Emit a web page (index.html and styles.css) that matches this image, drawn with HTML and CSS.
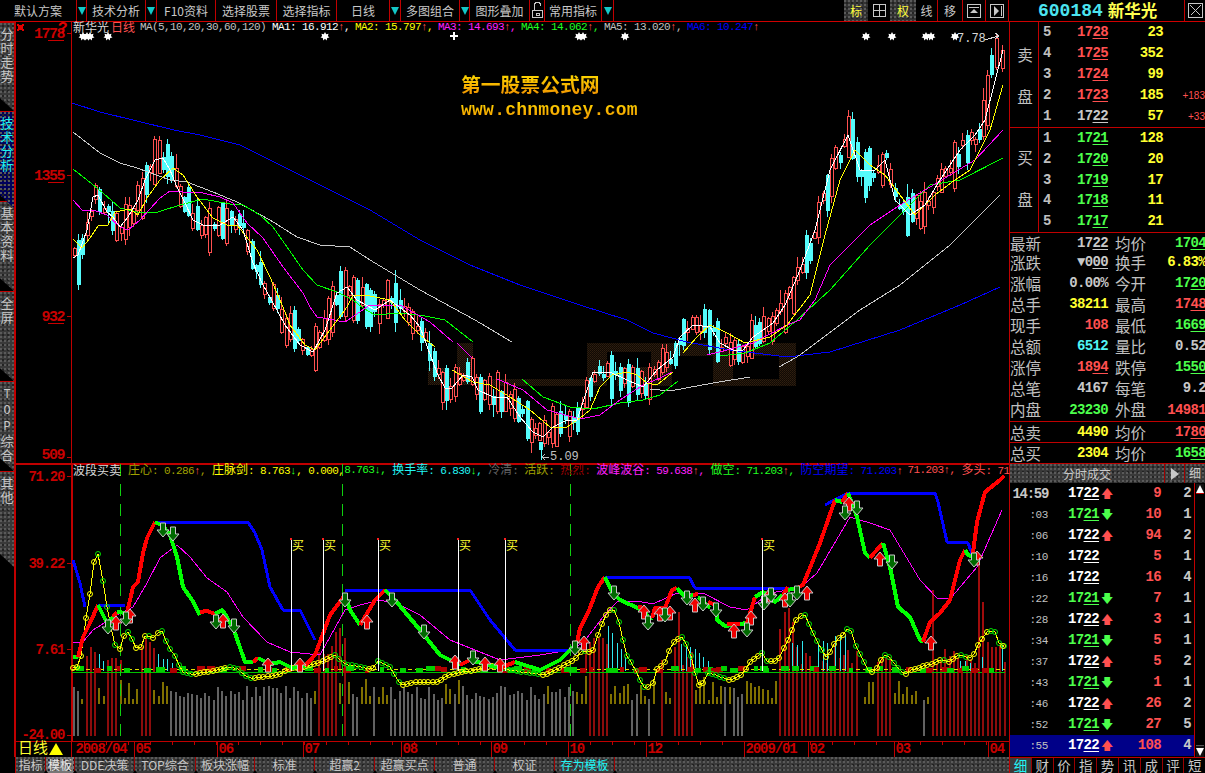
FILE: index.html
```html
<!DOCTYPE html>
<html lang="zh-CN">
<head>
<meta charset="utf-8">
<title>新华光 600184 日线</title>
<link rel="stylesheet" href="styles.css">
</head>
<body>
<div class="app">
  <header class="toolbar">
    <div class="tb w77">默认方案</div><div class="tb drop w10"></div>
    <div class="tb w59">技术分析</div><div class="tb drop w11"></div>
    <div class="tb w59 mono-mix">F10资料</div>
    <div class="tb w61">选择股票</div>
    <div class="tb w60">选择指标</div>
    <div class="tb w53">日线</div><div class="tb drop w11"></div>
    <div class="tb w59">多图组合</div><div class="tb drop w10"></div>
    <div class="tb w60">图形叠加</div>
    <div class="tb w15">
      <svg class="ico" viewBox="0 0 13 17" width="13" height="17"><path class="ln" d="M3 8V4a3.5 3.5 0 0 1 7 0M1.500 8.500h10v7h-10zM5 11.500h3v2H5z"/></svg>
    </div>
    <div class="tb w57">常用指标</div><div class="tb drop w12 end"></div>
    <div class="tb-space"></div>
    <div class="tb w24 on">标</div>
    <div class="tb w22"><svg class="ico" viewBox="0 0 13 13" width="13" height="13"><path class="ln" d="M.5.500h12v12H.5zM6.500.500v12M.5 6.500h12"/></svg></div>
    <div class="tb w26 on">权</div>
    <div class="tb w22 sep">线</div>
    <div class="tb w25">移</div>
    <div class="tb w23"><svg class="ico" viewBox="0 0 14 14" width="14" height="14"><path class="ln" d="M.5.500h13v13H.5zM2 3.500h10"/><path class="fl" d="M7 5l4 4H3z"/></svg></div>
    <div class="tb w23"><svg class="ico" viewBox="0 0 14 14" width="14" height="14"><path class="ln" d="M.5.500h13v13H.5zM11.500 2v10"/><path class="fl" d="M4 2l5 5-5 5z"/></svg></div>
    <div class="tb code"><span class="code-num">600184</span><span class="code-name">新华光</span></div>
    <div class="tb close"><svg class="ico" viewBox="0 0 15 15" width="15" height="15"><path class="ln" d="M.5.500h14v14H.5zM2.500 2.500l10 10M12.500 2.500l-10 10"/></svg></div>
  </header>

  <div class="workspace">
    <div class="left">
      <div class="chart-row">
        <nav class="sidetabs">
          <div class="stab first">分时走势</div>
          <div class="stab active">技术分析</div>
          <div class="stab">基本资料</div>
          <div class="stab">全屏</div>
          <div class="stab"><span class="latin">TOP</span>综合</div>
          <div class="stab last">其他</div>
        </nav>
        <div class="plot">
          <svg id="chart" class="chart" viewBox="16 22 993 735" width="993" height="735" role="img" aria-label="新华光日线图"></svg>

          <div class="legend legend-top">
            <span class="cn cwhite">新华光</span><span class="cn cred gap2">日线</span><span class="cgrey gap5">MA(5,10,20,30,60,120)</span>
            <span class="ma first-ma cbright">MA1: 16.912<i class="cred">↑</i>,</span><span class="ma cyellow">MA2: 15.797<i class="cred">↑</i>,</span><span class="ma cmag">MA3: 14.693<i class="cred">↑</i>,</span><span class="ma cgreen">MA4: 14.062<i class="cred">↑</i>,</span><span class="ma cgrey">MA5: 13.020<i class="cred">↑</i>,</span><span class="ma cblue">MA6: 10.247<i class="cred">↑</i></span>
          </div>

          <div class="watermark">
            <div class="wm-cn">第一股票公式网</div>
            <div class="wm-url">www.chnmoney.com</div>
          </div>

          <div class="legend legend-low">
            <span class="cn cwhite">波段买卖</span><span class="colive gap7"><span class="cn">庄心</span>: 0.286<i class="cred">↑</i>, </span><span class="cyellow"><span class="cn">庄脉剑</span>: 8.763<i class="cgreen">↓</i>, 0.000,</span><span class="cgreen">8.763<i>↓</i>, </span><span class="ccyan"><span class="cn">换手率</span>: 6.830<i class="cgreen">↓</i>, </span><span class="cdim"><span class="cn">冷清</span>: </span><span class="colive"><span class="cn">活跃</span>: </span><span class="cdarkred"><span class="cn">热烈</span>: </span><span class="cmag"><span class="cn">波峰波谷</span>: 59.638<i class="cred">↑</i>, </span><span class="cgreen"><span class="cn">做空</span>: 71.203<i class="cred">↑</i>, </span><span class="cblue"><span class="cn">防空期望</span>: 71.203<i class="cred">↑</i></span><span class="cred gap5">71.203<i>↑</i>, </span><span class="cred"><span class="cn">多头</span>: 71</span>
          </div>
        </div>
      </div>
      <nav class="bottomtabs">
        <div class="btab b30">指标</div>
        <div class="btab b29 sel">模板</div>
        <div class="btab b60">DDE决策</div>
        <div class="btab b61">TOP综合</div>
        <div class="btab b59">板块涨幅</div>
        <div class="btab b60">标准</div>
        <div class="btab b60">超赢2</div>
        <div class="btab b60">超赢买点</div>
        <div class="btab b60">普通</div>
        <div class="btab b60">权证</div>
        <div class="btab b60 ccyan">存为模板</div>
        <div class="btab-rest"></div>
      </nav>
    </div>

    <aside class="panel">
      <section class="book">
        <div class="book-side"><span>卖</span><span>盘</span></div>
        <div class="book-rows">
          <div class="book-row"><b class="idx">5</b><b class="px cup">17<u>28</u></b><b class="vol">23</b><span class="delta"></span></div>
          <div class="book-row"><b class="idx">4</b><b class="px cup">17<u>25</u></b><b class="vol">352</b><span class="delta"></span></div>
          <div class="book-row"><b class="idx">3</b><b class="px cup">17<u>24</u></b><b class="vol">99</b><span class="delta"></span></div>
          <div class="book-row"><b class="idx">2</b><b class="px cup">17<u>23</u></b><b class="vol">185</b><span class="delta">+183</span></div>
          <div class="book-row"><b class="idx">1</b><b class="px cflat">17<u>22</u></b><b class="vol">57</b><span class="delta">+33</span></div>
        </div>
      </section>
      <section class="book">
        <div class="book-side"><span>买</span><span>盘</span></div>
        <div class="book-rows">
          <div class="book-row"><b class="idx">1</b><b class="px cdown">17<u>21</u></b><b class="vol">128</b><span class="delta"></span></div>
          <div class="book-row"><b class="idx">2</b><b class="px cdown">17<u>20</u></b><b class="vol">20</b><span class="delta"></span></div>
          <div class="book-row"><b class="idx">3</b><b class="px cdown">17<u>19</u></b><b class="vol">17</b><span class="delta"></span></div>
          <div class="book-row"><b class="idx">4</b><b class="px cdown">17<u>18</u></b><b class="vol">11</b><span class="delta"></span></div>
          <div class="book-row"><b class="idx">5</b><b class="px cdown">17<u>17</u></b><b class="vol">21</b><span class="delta"></span></div>
        </div>
      </section>
      <section class="stats">
        <div class="s-row"><span>最新</span><b class="cflat">17<u>22</u></b><span class="l2">均价</span><b class="cdown">17<u>04</u></b></div>
        <div class="s-row"><span>涨跌</span><b class="cflat">▼0<u>00</u></b><span class="l2">换手</span><b class="cyel">6.83%</b></div>
        <div class="s-row"><span>涨幅</span><b class="cflat">0.00%</b><span class="l2">今开</span><b class="cdown">17<u>20</u></b></div>
        <div class="s-row"><span>总手</span><b class="cyel">38211</b><span class="l2">最高</span><b class="cup">17<u>48</u></b></div>
        <div class="s-row"><span>现手</span><b class="cup">108</b><span class="l2">最低</span><b class="cdown">16<u>69</u></b></div>
        <div class="s-row"><span>总额</span><b class="ccy">6512</b><span class="l2">量比</span><b class="cflat">0.52</b></div>
        <div class="s-row"><span>涨停</span><b class="cup">18<u>94</u></b><span class="l2">跌停</span><b class="cdown">15<u>50</u></b></div>
        <div class="s-row"><span>总笔</span><b class="cflat">4167</b><span class="l2">每笔</span><b class="cflat">9.2</b></div>
        <div class="s-row"><span>内盘</span><b class="cdown">23230</b><span class="l2">外盘</span><b class="cup">14981</b></div>
      </section>
      <section class="stats single">
        <div class="s-row"><span>总卖</span><b class="cyel">4490</b><span class="l2">均价</span><b class="cup">17<u>80</u></b></div>
      </section>
      <section class="stats single">
        <div class="s-row"><span>总买</span><b class="cyel">2304</b><span class="l2">均价</span><b class="cdown">16<u>58</u></b></div>
      </section>
      <div class="tick-head tex">
        <div class="th-title">分时成交</div>
        <div class="th-play"><svg viewBox="0 0 8 12" width="8" height="12"><path class="fl" d="M0 0l8 6-8 6z"/></svg></div>
        <div class="th-fine">细</div>
      </div>
      <div class="tick-body">
        <div class="ticks">
          <div class="tick"><b class="t big">14:59</b><b class="p cw">17<u>22</u></b><i class="dir cup">🡅</i><b class="v">9</b><b class="n">2</b></div>
          <div class="tick"><span class="t">:03</span><b class="p cdown">17<u>21</u></b><i class="dir cdown">🡇</i><b class="v">10</b><b class="n">1</b></div>
          <div class="tick"><span class="t">:06</span><b class="p cw">17<u>22</u></b><i class="dir cup">🡅</i><b class="v">94</b><b class="n">2</b></div>
          <div class="tick"><span class="t">:10</span><b class="p cw">17<u>22</u></b><i class="dir"></i><b class="v">5</b><b class="n">1</b></div>
          <div class="tick"><span class="t">:16</span><b class="p cw">17<u>22</u></b><i class="dir"></i><b class="v">16</b><b class="n">4</b></div>
          <div class="tick"><span class="t">:22</span><b class="p cdown">17<u>21</u></b><i class="dir cdown">🡇</i><b class="v">7</b><b class="n">1</b></div>
          <div class="tick"><span class="t">:28</span><b class="p cw">17<u>22</u></b><i class="dir cup">🡅</i><b class="v">3</b><b class="n">1</b></div>
          <div class="tick"><span class="t">:34</span><b class="p cdown">17<u>21</u></b><i class="dir cdown">🡇</i><b class="v">5</b><b class="n">1</b></div>
          <div class="tick"><span class="t">:37</span><b class="p cw">17<u>22</u></b><i class="dir cup">🡅</i><b class="v">5</b><b class="n">2</b></div>
          <div class="tick"><span class="t">:43</span><b class="p cdown">17<u>21</u></b><i class="dir cdown">🡇</i><b class="v">1</b><b class="n">1</b></div>
          <div class="tick"><span class="t">:46</span><b class="p cw">17<u>22</u></b><i class="dir cup">🡅</i><b class="v">26</b><b class="n">2</b></div>
          <div class="tick"><span class="t">:52</span><b class="p cdown">17<u>21</u></b><i class="dir cdown">🡇</i><b class="v">27</b><b class="n">5</b></div>
          <div class="tick now"><span class="t">:55</span><b class="p cw">17<u>22</u></b><i class="dir cup">🡅</i><b class="v">108</b><b class="n">4</b></div>
        </div>
        <div class="scroll">
          <div class="sbtn"><svg viewBox="0 0 8 8" width="8" height="8"><path class="fw" d="M4 0l4 8H0z"/></svg></div>
          <div class="sbtn"><svg viewBox="0 0 8 8" width="8" height="8"><path class="fw" d="M4 8L0 0h8z"/></svg></div>
        </div>
      </div>
      <nav class="ptabs">
        <div class="ptab on">细</div><div class="ptab">财</div><div class="ptab">价</div><div class="ptab">指</div><div class="ptab">势</div><div class="ptab">讯</div><div class="ptab">成</div><div class="ptab">评</div><div class="ptab">短</div>
      </nav>
    </aside>
  </div>
</div>
<script src="chart.js"></script>
</body>
</html>
```
FILE: styles.css
```css
* { box-sizing: border-box; }
html, body { margin: 0; padding: 0; background: #000; }
body { width: 1205px; height: 773px; overflow: hidden; color: #c0c0c0;
  font-family: "Noto Sans CJK SC", "Liberation Sans", sans-serif; font-size: 12px; }
i { font-style: normal; }
u { text-decoration: underline; text-decoration-thickness: 1px; text-underline-offset: 2px; text-decoration-skip-ink: none; }
.app { width: 1205px; height: 773px; display: flex; flex-direction: column; }

.tex, .tb.on, .stab, .btab, .btab-rest { background-color: #393939;
  background-image: radial-gradient(circle at 1px 1px, #5c5c5c .7px, transparent .9px), radial-gradient(circle at 3px 3px, #222 .7px, transparent .9px);
  background-size: 4px 4px, 5px 5px; }

/* toolbar */
.toolbar { flex: 0 0 22px; display: flex; border-bottom: 1px solid #d00000; }
.tb { display: flex; align-items: center; justify-content: center; border-right: 1px solid #c00000;
  color: #c8c8c8; font-size: 12px; line-height: 1; height: 21px; white-space: nowrap; }
.w77 { width: 77px; } .w59 { width: 59px; } .w61 { width: 61px; } .w60 { width: 60px; } .w53 { width: 53px; }
.w57 { width: 57px; } .w10 { width: 10px; } .w11 { width: 11px; } .w12 { width: 12px; } .w15 { width: 15px; }
.w24 { width: 24px; } .w22 { width: 22px; } .w26 { width: 26px; } .w25 { width: 25px; } .w23 { width: 23px; }
.drop::before { content: ""; border-left: 4px solid transparent; border-right: 4px solid transparent; border-top: 8px solid #12c8c8; }
.tb-space { width: 230px; }
.tb.on { color: #ffff3c; background-color: #333; border-right: 0; }
.toolbar .w22, .toolbar .w26, .w24 { border-right: 0; }
.toolbar .sep { border-right: 1px solid #c00000; }
.ico { display: block; }
.ln { fill: none; stroke: #c8c8c8; stroke-width: 1; shape-rendering: crispEdges; }
.fl { fill: #c8c8c8; }
.fw { fill: #fff; }
.code { width: 176px; justify-content: flex-start; padding-left: 29px; gap: 5px; }
.code-num { font: bold 18px "Liberation Mono", monospace; color: #4ce4f0; }
.code-name { font-size: 16.500px; font-weight: 700; color: #ffff50; }
.close { width: 20px; border-right: 0; }

/* layout */
.workspace { flex: 1; display: flex; min-height: 0; }
.left { width: 1009px; display: flex; flex-direction: column; }
.chart-row { flex: 0 0 735px; display: flex; }
.sidetabs { width: 16px; border-right: 2px solid #c00000; display: flex; flex-direction: column; overflow: hidden; }
.stab { width: 14px; height: 90px; flex: 0 0 auto; padding: 4px 0 0 0; text-align: center; word-break: break-all;
  font-size: 13px; line-height: 14px; color: #c8c8c8;
  clip-path: polygon(0 0, 100% 0, 100% 100%, 0 calc(100% - 13px)); border-top: 1px solid #c00000; }
.stab.first { height: 89px; }
.stab.active { height: 97px; margin-bottom: -7px; background-color: #00005c; color: #1cf0f0; position: relative; z-index: 1; }
.stab.last { height: 96px; }
.latin { font-family: "Liberation Mono", monospace; font-size: 12px; }
.plot { position: relative; width: 993px; height: 735px; }
.chart { display: block; background: #000; }
.chart text { font-family: "Liberation Mono", monospace; }

/* legends over the chart */
.legend { position: absolute; left: 57px; height: 14px; display: flex; white-space: pre; align-items: center;
  font: 11px/14px "Liberation Mono", "Noto Sans CJK SC", monospace; letter-spacing: -.6px; }
.legend .cn { font-family: "Noto Sans CJK SC", sans-serif; font-size: 12px; letter-spacing: 0; }
.legend-top { top: -2px; width: 930px; }
.legend-low { top: 441px; width: 936px; }
.gap2 { margin-left: 2px; } .gap5 { margin-left: 5px; } .gap7 { margin-left: 7px; }
.ma { width: 83px; flex: 0 0 83px; }
.first-ma { margin-left: 6px; }
.cwhite { color: #d8d8d8; } .cbright { color: #fff; } .cred { color: #ff5050; } .cgrey { color: #c0c0c0; }
.cyellow { color: #ffff00; } .cmag { color: #ff20ff; } .cgreen { color: #20ff20; } .cblue { color: #0000ff; }
.colive { color: #a0a000; } .ccyan { color: #22f4f4; } .cdim { color: #666; } .cdarkred { color: #a00000; }

.watermark { position: absolute; left: 445px; top: 50px; font-weight: 700; }
.wm-cn, .wm-url { background: linear-gradient(#ffe000, #f09000); -webkit-background-clip: text; background-clip: text; color: transparent; }
.wm-cn { font-size: 19.800px; line-height: 24px; }
.wm-url { font: bold 18px/22px "Liberation Mono", monospace; letter-spacing: .25px; margin-top: 3px; }

/* bottom strip */
.bottomtabs { flex: 1; display: flex; margin-left: 15px; border-left: 1px solid #c00000; }
.btab { flex: 0 0 auto; display: flex; align-items: center; justify-content: center; position: relative; height: 16px;
  border-right: 1px solid #a00000; color: #c8c8c8; font-size: 12px; line-height: 1; white-space: nowrap; font-family: "Noto Sans CJK SC", sans-serif; }
.btab::after { content: ""; position: absolute; right: -3px; bottom: 0; border-left: 2.500px solid transparent; border-right: 2.500px solid transparent; border-bottom: 3px solid #000; z-index: 1; }
.btab.ccyan { color: #22f4f4; }
.btab.sel { background-color: #777; color: #e8e8e8; }
.b30 { width: 30px; } .b29 { width: 29px; } .b60 { width: 60px; } .b61 { width: 61px; } .b59 { width: 59px; }
.btab-rest { flex: 1; height: 16px; }

/* right panel */
.panel { width: 196px; display: flex; flex-direction: column; border-left: 1px solid #c00000; }
.panel b { font-family: "Liberation Mono", monospace; font-size: 14px; letter-spacing: -.65px; font-weight: 700; }
.book { display: flex; height: 105px; flex: 0 0 105px; }
.book + .book { border-top: 1px solid #c00000; }
.book-side { width: 29px; border-right: 1px solid #c00000; display: flex; flex-direction: column; justify-content: center; gap: 26px; align-items: center;
  font-size: 15.500px; line-height: 1; color: #c0c0c0; padding: 2px 0 0 2px; }
.book + .book .book-side { padding: 0 0 3px 2px; }
.book-rows { flex: 1; display: flex; flex-direction: column; }
.book-row { height: 21px; flex: 0 0 21px; display: flex; align-items: center; line-height: 21px; }
.book + .book .book-row { height: 20.800px; flex-basis: 20.800px; }
.idx { width: 38px; padding-left: 4px; color: #c0c0c0; }
.px { width: 31px; }
.vol { width: 55px; text-align: right; color: #ffff30; }
.delta { flex: 1; text-align: right; color: #ff5050; font-size: 10px; font-family: "Liberation Sans", sans-serif; }
.cup { color: #ff5050; } .cdown { color: #4cff4c; } .cflat { color: #c8c8c8; } .cyel { color: #ffff30; } .ccy { color: #50f4f4; } .cw { color: #fff; }

.stats { border-top: 1px solid #c00000; }
.stats.single { height: 21px; }
.s-row { height: 21px; display: grid; grid-template-columns: 31px 67px 38px 1fr; align-items: center; line-height: 21px; white-space: nowrap; overflow: hidden; }
.stats:not(.single) .s-row:first-child { height: 19px; }
.stats:not(.single) .s-row:last-child { height: 22px; }
.stats.single .s-row { height: 19px; }
.s-row span { font-size: 15.500px; line-height: 1; color: #c0c0c0; }
.s-row .l2 { padding-left: 7px; }
.s-row b { text-align: right; }
.s-row b:last-child { margin-right: -1px; }

.tick-head { flex: 0 0 20px; display: flex; align-items: center; border-top: 1px solid #c00000; color: #c8c8c8; }
.th-title { width: 154px; text-align: center; font-size: 12px; line-height: 1; }
.th-play { width: 20px; height: 19px; border-left: 1px solid #a00000; display: flex; align-items: center; justify-content: center; }
.th-fine { flex: 1; height: 19px; border-left: 1px solid #a00000; text-align: center; line-height: 18px; font-size: 12px; }

.tick-body { flex: 0 0 274px; display: flex; }
.ticks { width: 185px; }
.tick { height: 21px; display: flex; align-items: center; line-height: 21px; white-space: nowrap; }
.t { width: 38px; text-align: right; color: #c0c0c0; font: 11px "Liberation Mono", monospace; letter-spacing: -.4px; }
.panel .t.big { font-size: 14px; letter-spacing: -1.300px; color: #c8c8c8; }
.p { width: 31px; margin-left: 20px; }
.dir { width: 15px; font-family: "DejaVu Sans", sans-serif; font-size: 12px; text-align: center; line-height: 1; }
.panel .v { width: 47px; text-align: right; color: #ff5050; }
.panel .n { width: 30px; text-align: right; color: #c8c8c8; }
.tick.now { background: #000088; }
.scroll { flex: 1; border-left: 1px solid #c00000; display: flex; flex-direction: column; justify-content: space-between; padding: 1px 1px 0 1px; }
.sbtn { height: 10px; display: flex; align-items: center; justify-content: center; background: #111; border-bottom: 1px solid #c00000; }
.sbtn:last-child { border-bottom: 0; border-top: 1px solid #555; height: 12px; }

.ptabs { flex: 1; display: flex; border-top: 1px solid #c00000; }
.ptab { flex: 0 0 21.800px; font-size: 13.500px; line-height: 15px; text-align: center; color: #c8c8c8; border-right: 1px solid #900; }
.ptab.on { color: #22f4f4; background: #3a3a3a; }
```
FILE: chart.js
```js
(function () {
  var NS = 'http://www.w3.org/2000/svg';
  var svg = document.getElementById('chart');
  var seed = 184;
  function rnd() { seed = (seed * 16807) % 2147483647; return seed / 2147483647; }
  function el(tag, attrs, text, parent) {
    var n = document.createElementNS(NS, tag);
    for (var k in attrs) n.setAttribute(k, attrs[k]);
    if (text !== undefined && text !== null) n.textContent = text;
    (parent || svg).appendChild(n);
    return n;
  }
  function poly(points, color, width, extra) {
    var a = { points: points.map(function (p) { return p[0] + ',' + p[1]; }).join(' '), fill: 'none', stroke: color, 'stroke-width': width, 'shape-rendering': 'crispEdges', 'stroke-linejoin': 'round' };
    for (var k in extra || {}) a[k] = extra[k];
    el('polyline', a);
  }
  function line(x1, y1, x2, y2, color, w, dash) {
    var a = { x1: x1, y1: y1, x2: x2, y2: y2, stroke: color, 'stroke-width': w || 1, 'shape-rendering': 'crispEdges' };
    if (dash) a['stroke-dasharray'] = dash;
    el('line', a);
  }
  function rect(x, y, w, h, fill, stroke) {
    var a = { x: x, y: y, width: w, height: h, fill: fill, 'shape-rendering': 'crispEdges' };
    if (stroke) a.stroke = stroke;
    el('rect', a);
  }
  function interp(path, x) {
    if (x <= path[0][0]) return path[0][1];
    for (var i = 1; i < path.length; i++) {
      if (x <= path[i][0]) {
        var a = path[i - 1], b = path[i];
        return a[1] + (b[1] - a[1]) * (x - a[0]) / (b[0] - a[0]);
      }
    }
    return path[path.length - 1][1];
  }

  /* ---------- background ghost blocks ---------- */
  var RED = '#c00000';
  var ghost = [[428,368,22,17],[457,343,16,42],[473,379,114,7],[587,343,20,43],[587,343,85,9],[651,343,21,43],[617,367,55,19],[672,343,41,13],[713,343,83,13],[713,356,20,30],[733,379,63,7],[779,343,17,43]];
  var defs = el('defs', {});
  var pat = el('pattern', { id: 'ghostp', width: 2, height: 2, patternUnits: 'userSpaceOnUse' }, null, defs);
  el('rect', { width: 2, height: 2, fill: '#100a04' }, null, pat);
  el('rect', { width: 1, height: 1, fill: '#301f10' }, null, pat);
  el('rect', { x: 1, y: 1, width: 1, height: 1, fill: '#28190c' }, null, pat);
  ghost.forEach(function (g) { rect(g[0], g[1], g[2], g[3], 'url(#ghostp)'); });

  /* ---------- moving average lines of the price chart ---------- */
  var white = [[73,258],[78,255],[87,230],[93,197],[98,195],[107,212],[113,217],[120,227],[128,217],[138,200],[145,180],[155,160],[163,158],[170,170],[177,187],[185,203],[193,220],[203,225],[220,225],[233,217],[243,230],[253,263],[263,285],[277,310],[285,325],[300,345],[313,352],[325,330],[337,293],[347,287],[357,300],[375,310],[390,300],[410,315],[420,327],[437,373],[445,388],[452,388],[463,375],[472,377],[478,390],[493,397],[507,397],[520,417],[533,432],[543,437],[553,427],[567,420],[577,420],[587,390],[593,372],[610,372],[627,380],[643,387],[657,370],[673,357],[680,337],[693,325],[710,327],[720,343],[733,350],[743,350],[753,337],[773,323],[785,305],[800,270],[815,230],[830,170],[848,135],[860,170],[875,170],[885,160],[895,200],[910,215],[925,205],[940,180],[960,150],[975,135],[985,120],[1003,50]];
  var yellow = [[[73,239],[82,248],[90,238],[98,226],[108,225],[115,212],[130,209],[138,215],[147,198],[160,180],[173,168],[183,175],[197,197],[213,218],[227,225],[237,225],[257,250],[270,277],[283,307],[290,325],[305,345],[315,350],[330,330],[347,307],[353,295],[370,296],[390,300],[405,320],[420,335],[435,347]],
    [[452,370],[473,382],[490,385],[510,397],[530,410],[550,427],[567,427],[580,418],[590,410],[600,387],[612,375],[627,372],[637,375],[647,383],[657,385],[673,372]],
    [[683,353],[697,337],[710,325],[727,333],[745,343],[770,337],[787,325],[810,295],[825,235],[840,180],[855,150],[870,165],[885,175],[900,195],[915,215],[935,195],[955,180],[970,170],[990,130],[1003,85]]];
  var magenta = [[[73,200],[82,210],[93,210],[107,215],[120,227],[128,230],[140,220],[160,198],[170,191],[183,192],[203,193],[220,197],[233,203],[247,223],[263,238],[283,267],[303,293],[310,307],[317,317],[345,322],[370,305],[400,305],[430,322],[453,342]],
    [[457,343],[472,358]],
    [[497,379],[523,390],[547,410],[580,419],[600,415],[620,400],[643,385],[660,378],[672,372]],
    [[707,355],[727,350],[753,343],[787,325],[800,320],[815,300],[830,265],[855,240],[870,225],[900,205],[925,190],[950,175],[975,160],[1003,130]]];
  var green = [[[73,169],[87,180],[103,193],[120,208],[137,212],[158,212],[180,205],[203,199],[230,204],[243,205],[260,215],[273,227],[287,247],[303,270],[317,285],[337,292],[353,300],[363,308],[375,315],[400,313],[425,316],[445,320],[473,342]],
    [[522,379],[543,397],[570,407],[593,409],[620,403],[643,400],[660,395],[678,381]],
    [[720,356],[745,353],[770,343],[797,320],[830,290],[870,245],[900,215],[930,185],[960,180],[1003,158]]];
  var gray = [[[73,132],[100,153],[120,163],[137,168],[170,180],[187,182],[213,192],[237,202],[270,220],[297,237],[320,245],[350,247],[370,260],[400,278],[420,290],[475,320],[512,342]],
    [[650,389],[670,391],[713,383],[750,377]],
    [[779,367],[797,357],[820,340],[860,310],[900,285],[950,245],[1000,195]]];
  var blue = [[[72,103],[100,112],[174,130],[200,135],[240,145],[280,165],[330,190],[370,210],[420,240],[470,265],[520,285],[580,305],[627,320],[653,333],[687,342],[730,350],[787,357],[830,352],[900,330],[960,305],[1000,287]]];

  /* ---------- candles ---------- */
  var STEP = 4.23;
  for (var i = 0; i < 218; i++) {
    var x = Math.round(73 + i * STEP);
    if (x > 982) break;
    var c = interp(white, x);
    var slope = interp(white, x + 4) - interp(white, x - 4);
    var up = rnd() < (slope < 0 ? 0.78 : 0.38);
    var h = 4 + Math.pow(rnd(), 1.6) * 42;
    var mid = c + (rnd() - .5) * 14;
    var top = Math.round(mid - h / 2), bot = Math.round(mid + h / 2);
    var wt = Math.round(top - rnd() * rnd() * 14 - 1), wb = Math.round(bot + rnd() * rnd() * 12 + 1);
    var col = up ? '#ff5050' : '#54fcfc';
    line(x + 1.5, wt, x + 1.5, wb, col, 1);
    if (up) rect(x + .5, top + .5, 3, Math.max(bot - top, 1), '#000', col);
    else rect(x, top, 4, Math.max(bot - top, 1), col);
  }
  [[986,70,130,75,125,1],[990,48,78,55,75,0],[995,35,70,38,67,1],[1001,45,72,50,68,1]].forEach(function (k) {
    var col = k[5] ? '#ff5050' : '#54fcfc';
    line(k[0] + 1.5, k[1], k[0] + 1.5, k[2], col, 1);
    if (k[5]) rect(k[0] + .5, k[3] + .5, 3, k[4] - k[3], '#000', col); else rect(k[0], k[3], 4, k[4] - k[3], col);
  });
  line(541, 442, 541, 460, '#54fcfc', 1);
  rect(539, 442, 4, 8, '#54fcfc');

  blue.forEach(function (p) { poly(p, '#0000ff', 1); });
  gray.forEach(function (p) { poly(p, '#c8c8c8', 1); });
  green.forEach(function (p) { poly(p, '#00ff00', 1); });
  magenta.forEach(function (p) { poly(p, '#ff00ff', 1); });
  yellow.forEach(function (p) { poly(p, '#ffff00', 1); });
  poly(white, '#ffffff', 1);

  /* extreme notes */
  el('text', { x: 550, y: 460, fill: '#c0c0c0', 'font-size': 12 }, '5.09');
  poly([[549, 457], [542, 457]], '#c0c0c0', 1);
  poly([[545, 454], [542, 457], [545, 460]], '#c0c0c0', 1);
  el('text', { x: 957, y: 42, fill: '#d8d8d8', 'font-size': 12 }, '7.78');
  poly([[985, 40], [998, 36]], '#d8d8d8', 1);
  poly([[995, 33], [999, 36], [995, 39]], '#d8d8d8', 1);

  /* note markers */
  [83, 87, 90, 108, 325, 454, 579, 583, 625, 866, 892, 926, 931, 955].forEach(function (mx) {
    var cross = mx === 454;
    el('path', { d: cross ? 'M' + (mx - 1) + ' 32h2v3h3v2h-3v3h-2v-3h-3v-2h3z' : 'M' + mx + ' 32l1.200 2.300 2.300-.6-.6 2.300 1.600 1.500-2.300.5-.5 2.500-1.700-1.700-1.700 1.700-.5-2.500-2.300-.5 1.600-1.500-.6-2.300 2.300.6z', fill: '#fff' });
  });

  /* ---------- price axis ---------- */
  line(71.500, 22, 71.500, 463, RED, 1);
  [[1778, 40, '78'], [1355, 182, '55'], [932, 323, '32'], [509, 461, '']].forEach(function (t) {
    el('text', { x: 64, y: t[1] - 2, 'text-anchor': 'end', fill: '#c80000', 'font-size': 15, 'font-weight': 700, 'letter-spacing': '-1.500' }, t[0]);
    if (t[2]) line(48, t[1] + .5, 64, t[1] + .5, '#c80000', 1);
  });
  [33, 175, 316, 457].forEach(function (y) { line(67, y + .5, 71, y + .5, RED, 1); });
  el('path', { d: 'M17 24h2v1h3v-1h2v2h-1v3h1v2h-2v-1h-3v1h-2v-2h1v-3h-1z', fill: '#e00000' });
  el('text', { x: 58, y: 33, fill: '#e00000', 'font-size': 16, 'font-weight': 700 }, '?');

  /* ---------- lower panel ---------- */
  rect(16, 462.500, 993, 2, RED);
  line(71.500, 463, 71.500, 741, RED, 2);
  [[476, '71.20', 5], [563, '39.22', 5], [649, '7.61', 5], [735, '-24.00', 4]].forEach(function (t) {
    el('text', { x: 64, y: t[0] + t[2], 'text-anchor': 'end', fill: '#c80000', 'font-size': 14, 'font-weight': 700, 'letter-spacing': '-1.300' }, t[1]);
    line(67, t[0] + .5, 71, t[0] + .5, RED, 1);
  });

  /* volume style bars */
  var cats = [[73,79,'g'],[80,84,'o'],[85,97,'r'],[98,104,'o'],[105,119,'r'],[120,137,'o'],[140,152,'r'],[153,168,'o'],[170,311,'g'],[312,315,'o'],[316,336,'r'],[337,340,'o'],[341,344,'r'],[345,350,'o'],[351,358,'g'],[359,371,'o'],[372,375,'g'],[376,387,'o'],[388,444,'g'],[445,451,'o'],[452,456,'g'],[457,460,'o'],[461,543,'g'],[544,549,'o'],[550,575,'g'],[576,585,'o'],[586,606,'r'],[607,628,'o'],[629,636,'g'],[637,647,'o'],[648,650,'g'],[651,654,'o'],[659,662,'r'],[663,670,'o'],[672,691,'r'],[693,723,'o'],[724,727,'g'],[728,731,'o'],[732,743,'g'],[745,776,'o'],[779,859,'r'],[861,876,'o'],[877,893,'r'],[894,918,'o'],[920,923,'g'],[924,928,'o'],[929,1005,'r']];
  function cat(x) { for (var j = 0; j < cats.length; j++) if (x >= cats[j][0] && x <= cats[j][1]) return cats[j][2]; return null; }
  var cyanList = { 99:17, 103:10, 158:17, 163:12, 167:12, 172:8, 608:45, 612:38, 617:28, 621:22, 625:14, 681:27, 686:26, 690:24, 695:22, 699:18, 703:14, 708:10, 792:28, 797:26, 802:30, 818:26, 823:30, 827:28, 835:35, 840:36, 845:36, 1002:25, 982:14, 960:10, 965:10, 970:8 };
  var tallRed = { 677:60, 779:43, 783:60, 788:64, 793:50, 587:30, 592:34, 596:38, 600:34, 605:28, 930:82, 977:112, 981:70, 985:55, 989:30, 993:25, 140:25, 144:33, 148:30, 152:24, 85:16, 89:25, 93:20, 108:12, 113:14, 118:12, 320:20, 325:18, 330:26, 334:40, 338:44, 342:34 };
  var xs = [];
  for (var b = 0; b < 222; b++) {
    var bx = Math.round(73 + b * STEP);
    if (bx > 1005) break;
    xs.push(bx);
    var kind = cat(bx);
    if (kind === 'r') rect(bx, 672, 2, 64, '#8c0c0c');
    else if (kind === 'o') { var ot = 676 + rnd() * 24; rect(bx, ot, 2, 704 - ot, '#807000'); }
    else if (kind === 'g') { var gt = 686 + rnd() * 14; rect(bx, gt, 2, 736 - gt, '#626262'); }
    var near = null;
    for (var d = -2; d <= 2; d++) if (tallRed[bx + d]) near = tallRed[bx + d];
    if (near) rect(bx, 672 - near, 2, near, '#a00c0c');
    else if (kind === 'r') { var th = 4 + rnd() * 24; rect(bx, 672 - th, 2, th, '#a00c0c'); }
  }
  Object.keys(cyanList).forEach(function (k) { rect(+k, 671 - cyanList[k], 1, cyanList[k], '#30e8f0'); });

  /* baseline band */
  line(72, 672.500, 1005, 672.500, '#00c000', 1);
  line(72, 669.500, 1005, 669.500, '#e0e000', 1, '4 3');
  for (var m = 76; m < 1003; m += 3 + Math.floor(rnd() * 18)) {
    rect(m, 666 + Math.floor(rnd() * 3), 4 + Math.floor(rnd() * 5), 5, rnd() < .4 ? '#b00000' : '#00d000');
  }

  /* dashed verticals */
  [120, 342, 570].forEach(function (vx) { line(vx + .5, 464, vx + .5, 741, '#10d010', 1, '12 8'); });

  /* magenta */
  poly([[73,642],[82,643],[93,630],[117,615],[133,607],[147,583],[160,558],[177,545],[190,557],[207,578],[227,592],[243,617],[267,642],[290,652],[320,655],[345,610],[360,605],[380,600],[400,605],[420,615],[450,640],[500,660],[540,655],[570,650],[583,643],[603,617],[617,602],[637,601],[653,604],[677,593],[703,593],[730,607],[747,610],[770,593],[800,588],[817,573],[850,517],[870,523],[890,530],[920,580],[937,598],[950,599],[977,567],[1002,510]], '#ff00ff', 1);

  /* blue stepped line */
  [[[73,560],[80,583],[85,607]], [[98,605],[125,605]], [[155,522],[248,522],[255,533],[262,550],[270,587],[283,610],[300,610],[315,640]], [[345,590],[440,590],[470,590],[490,620],[515,650],[570,650]], [[605,577],[689,577],[695,588],[800,588]], [[825,505],[848,493],[935,493],[938,502],[947,542],[968,543],[973,556]]].forEach(function (p) { poly(p, '#0000ff', 3); });

  /* the yellow ring line, one ring per bar */
  var ring = [[73,668],[78,667],[82,652],[86,618],[90,594],[94,562],[98,554],[103,581],[108,614],[115,645],[120,649],[124,636],[129,631],[133,642],[137,650],[141,647],[145,636],[150,636],[154,639],[159,631],[163,631],[167,644],[172,653],[176,657],[180,667],[184,673],[194,674],[207,672],[217,670],[230,667],[237,668],[247,677],[253,678],[263,677],[278,675],[290,668],[300,668],[320,662],[335,655],[345,664],[355,666],[372,670],[377,660],[391,667],[397,680],[403,685],[415,682],[439,682],[447,675],[474,670],[494,665],[510,670],[545,675],[570,662],[578,656],[583,650],[592,653],[596,640],[600,630],[604,618],[612,607],[618,617],[622,635],[626,655],[630,660],[634,667],[640,680],[643,687],[652,687],[656,670],[665,662],[672,643],[677,640],[682,637],[686,644],[690,652],[695,673],[698,685],[703,683],[708,673],[715,675],[730,680],[742,675],[750,662],[762,653],[768,662],[778,660],[788,640],[797,617],[806,615],[810,627],[814,635],[818,643],[823,652],[827,658],[835,642],[844,634],[848,627],[853,633],[857,650],[861,655],[866,667],[870,673],[878,667],[882,657],[886,654],[892,660],[896,666],[905,675],[910,670],[928,665],[937,662],[942,659],[950,662],[959,654],[967,657],[972,658],[978,645],[983,637],[988,631],[995,632],[999,643],[1003,646]];
  var samples = xs.concat([1003]).map(function (rx) { return [rx, Math.round(interp(ring, rx))]; });
  poly(samples, '#ffff00', 1);
  samples.forEach(function (s, idx) {
    var nxt = samples[idx + 1] || s;
    var prev = samples[idx - 1] || s;
    var falling = nxt[1] > s[1] || (nxt[1] === s[1] && prev[1] < s[1]);
    el('circle', { cx: s[0], cy: s[1], r: 2.500, fill: 'none', stroke: falling ? '#00e000' : '#ffff00', 'stroke-width': 1 });
  });

  /* thick band line: alternating red and green pieces */
  var segs = [
    ['g', [[73,657],[78,657]]], ['r', [[78,657],[83,637],[90,623],[98,605]]], ['g', [[98,605],[107,623],[113,617]]], ['r', [[113,617],[117,612]]], ['g', [[117,612],[127,613]]],
    ['r', [[127,613],[133,587],[138,582],[143,553],[147,538],[155,522]]], ['g', [[155,522],[163,526],[170,535],[177,557],[183,587],[192,600],[200,615]]], ['r', [[200,612],[207,611],[215,614]]], ['g', [[215,614],[222,610],[227,617],[235,633],[245,662],[253,662]]],
    ['r', [[253,662],[258,658]]], ['g', [[258,658],[270,664],[280,662],[292,668],[305,666]]], ['r', [[305,666],[315,655],[330,615],[345,595]]], ['g', [[345,595],[350,610],[360,625]]], ['r', [[360,625],[375,600],[385,590]]],
    ['g', [[385,590],[395,600],[420,630],[440,655],[460,665]]], ['r', [[460,665],[470,660]]], ['g', [[470,660],[500,668]]], ['r', [[500,668],[515,662]]], ['g', [[515,662],[540,670],[560,660],[577,643]]],
    ['r', [[577,643],[580,628],[588,613],[598,587],[605,577]]], ['g', [[605,577],[612,592],[620,600],[640,609]]], ['r', [[638,607],[645,608]]], ['g', [[645,608],[648,620],[652,618]]], ['r', [[652,618],[655,608],[665,608],[672,590],[677,588]]],
    ['g', [[677,588],[685,597],[693,595]]], ['r', [[693,595],[698,594]]], ['g', [[698,597],[710,608]]], ['r', [[708,602],[716,605]]], ['g', [[716,605],[717,620],[725,626],[740,624]]], ['r', [[727,624],[740,624]]], ['g', [[740,624],[747,623]]],
    ['r', [[747,623],[755,597]]], ['g', [[755,597],[763,592],[775,602],[783,595]]], ['r', [[783,595],[788,587]]], ['g', [[788,590],[797,588]]], ['r', [[797,588],[803,585],[820,543],[835,500]]], ['g', [[835,500],[842,502]]], ['r', [[842,502],[848,493]]],
    ['g', [[848,493],[857,517],[865,553],[870,558]]], ['r', [[870,558],[875,552],[883,543]]], ['g', [[883,543],[890,567],[898,607],[910,617],[920,640],[923,642]]], ['r', [[923,642],[930,622],[940,613],[950,600],[960,560],[965,550]]], ['g', [[965,550],[968,555],[973,557]]], ['r', [[973,553],[977,522],[985,492],[1000,480],[1004,476]]]
  ];
  segs.forEach(function (s) { poly(s[1], s[0] === 'r' ? '#ff0000' : '#00ff00', 4); });

  /* arrows */
  function arrow(ax, ay, up) {
    var d = up
      ? 'M' + ax + ' ' + (ay - 7) + 'l6 7h-3.500v7h-5v-7h-3.500z'
      : 'M' + ax + ' ' + (ay + 7) + 'l6-7h-3.500v-7h-5v7h-3.500z';
    el('path', { d: d, fill: up ? '#f00000' : '#006a00', stroke: '#c8c8c8', 'stroke-width': 1 });
  }
  [[116,623],[130,616],[223,621],[268,665],[300,665],[367,622],[455,662],[485,664],[500,665],[584,643],[644,612],[660,614],[670,613],[695,605],[734,631],[751,618],[770,595],[785,600],[807,593],[849,504],[880,559],[931,643],[977,558]].forEach(function (a) { arrow(a[0], a[1], true); });
  [[108,627],[126,619],[163,530],[173,534],[216,622],[234,626],[345,600],[392,600],[424,632],[473,658],[575,648],[614,593],[648,623],[665,615],[687,598],[703,604],[716,610],[747,630],[764,603],[771,595],[790,600],[797,593],[845,513],[857,508],[892,562],[974,560]].forEach(function (a) { arrow(a[0], a[1], false); });

  /* buy flags */
  [291, 323, 378, 458, 505, 762].forEach(function (fx) {
    line(fx + .5, 539, fx + .5, 671, '#ffffff', 1);
    rect(fx - 1, 538, 2, 2, '#ff2020');
    el('text', { x: fx + 1, y: 550, fill: '#ffff30', 'font-size': 12, style: 'font-family:"Noto Sans CJK SC",sans-serif' }, '买');
  });

  /* ---------- time axis ---------- */
  rect(16, 741, 993, 1, RED);
  el('text', { x: 18, y: 753, fill: '#ffff30', 'font-size': 15, style: 'font-family:"Noto Sans CJK SC",sans-serif' }, '日线');
  el('path', { d: 'M56 743l7 12H49z', fill: '#ffff00' });
  line(71.500, 741, 71.500, 757, RED, 1);
  [[75,'2008/04'],[135,'05'],[218,'06'],[304,'07'],[402,'08'],[492,'09'],[569,'10'],[647,'12'],[745,'2009/01'],[809,'02'],[895,'03'],[989,'04']].forEach(function (t) {
    if (t[0] !== 75) line(t[0] - .5, 741, t[0] - .5, 757, RED, 1);
    el('text', { x: t[0] + .5, y: 753, fill: '#c80000', 'font-size': 14, 'font-weight': 700, 'letter-spacing': '-1.100' }, t[1]);
  });
  for (var tk = 84; tk < 1005; tk += 22) line(tk + .5, 742, tk + .5, 745, RED, 1);
})();
```
